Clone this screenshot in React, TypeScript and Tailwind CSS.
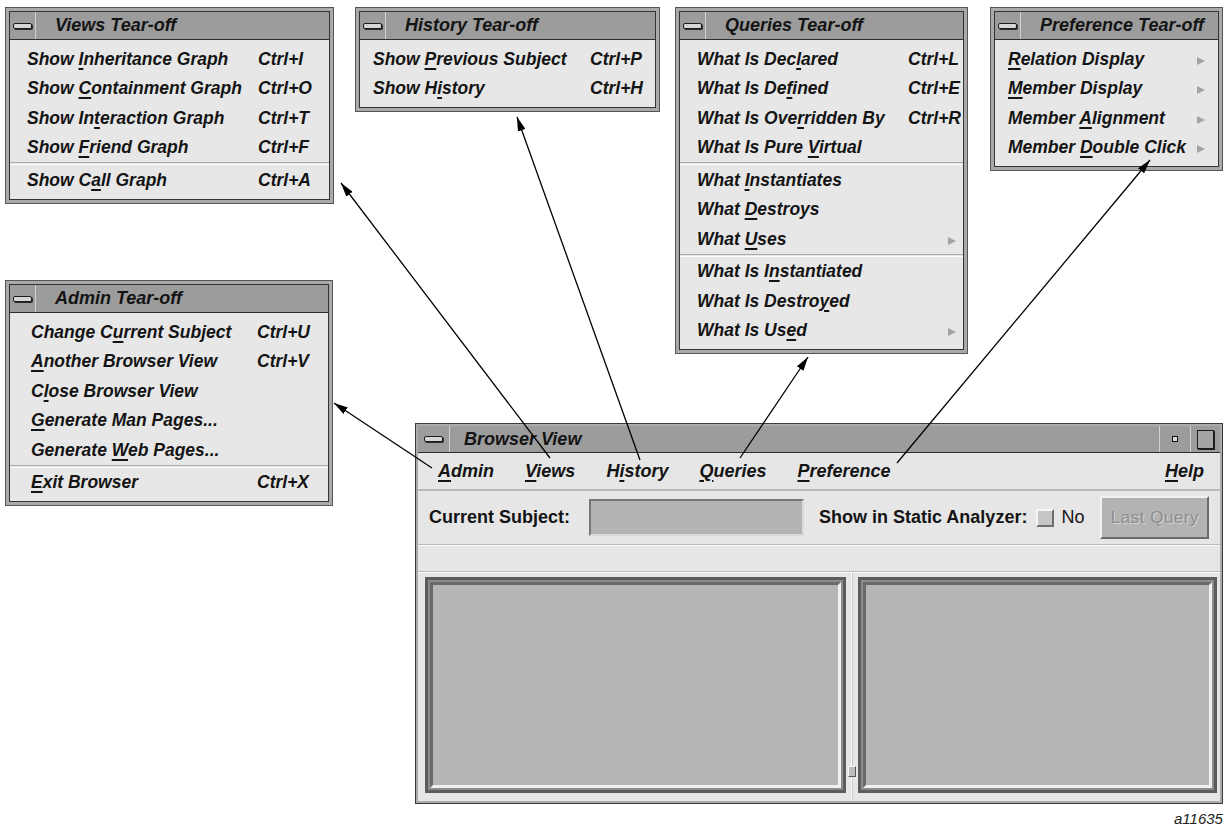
import React from 'react';

type Row = { t: string; k?: string; sub?: boolean } | 'sep';

// "&" marks the mnemonic letter
function Label({ t }: { t: string }) {
  const i = t.indexOf('&');
  if (i < 0) return <>{t}</>;
  return (
    <>
      {t.slice(0, i)}
      <span className="underline decoration-[1.5px] underline-offset-[3px]">{t[i + 1]}</span>
      {t.slice(i + 2)}
    </>
  );
}

function Tri() {
  return <span className="inline-block h-0 w-0 border-y-[4.5px] border-l-[8px] border-y-transparent border-l-[#a3a3a3]" />;
}

function MinusBox({ w }: { w: string }) {
  return (
    <div className={`${w} flex shrink-0 items-center justify-center border-r border-[#d2d2d2]`}>
      <div className="h-[6px] w-[19px] rounded-[2px] border border-[#1c1c1c] bg-[#d6d6d6] shadow-[1px_1px_0_#2a2a2a]" />
    </div>
  );
}

function TearOff({
  title,
  rows,
  pos,
  cols,
  pad,
  arrow = '',
}: {
  title: string;
  rows: Row[];
  pos: string;
  cols: string;
  pad: string;
  arrow?: string;
}) {
  return (
    <div className={`absolute ${pos} border border-[#565656] bg-[#a9a9a9] p-[3px]`}>
      <div className="border border-[#333]">
        <div className="flex h-[28px] border-b border-[#2e2e2e] bg-[#9c9c9c]">
          <MinusBox w="w-[26px]" />
          <div className="flex items-center pl-[19px] text-[18px] font-bold italic">{title}</div>
        </div>
        <div className="bg-[#e7e7e7] pb-[4px] pt-[4px]">
          {rows.map((r, i) =>
            r === 'sep' ? (
              <div key={i} className="h-[3px] border-y border-b-[#fbfbfb] border-t-[#a9a9a9]" />
            ) : (
              <div key={i} className={`grid h-[29.5px] items-center ${cols} ${pad} text-[17.5px] font-bold italic`}>
                <span className="whitespace-nowrap">
                  <Label t={r.t} />
                </span>
                <span className="flex items-center whitespace-nowrap">
                  {r.k}
                  {r.sub && (
                    <span className={arrow}>
                      <Tri />
                    </span>
                  )}
                </span>
              </div>
            )
          )}
        </div>
      </div>
    </div>
  );
}

function BrowserView() {
  return (
    <div className="absolute left-[415px] top-[423px] flex h-[381px] w-[808px] flex-col border border-[#3a3a3a] bg-[#ababab] p-[2px]">
      {/* title bar */}
      <div className="flex h-[27px] shrink-0 border-b border-[#2e2e2e] bg-[#9c9c9c]">
        <MinusBox w="w-[32px]" />
        <div className="flex flex-1 items-center pl-[14px] text-[18px] font-bold italic">Browser View</div>
        <div className="flex w-[31px] items-center justify-center border-l border-[#d2d2d2]">
          <div className="h-[6px] w-[6px] border border-[#111] bg-[#d9d9d9]" />
        </div>
        <div className="flex w-[30px] items-center justify-center border-l border-[#d2d2d2]">
          <div className="h-[19px] w-[17px] border border-[#1c1c1c] bg-[#a5a5a5] shadow-[1px_1px_0_#1c1c1c]" />
        </div>
      </div>

      <div className="flex flex-1 flex-col bg-[#e6e6e6]">
        {/* menu bar */}
        <div className="flex h-[38px] shrink-0 items-center gap-[31px] border-b-2 border-b-[#b9b9b9] pl-[20px] pr-[16px] text-[18px] font-bold italic">
          <span><Label t="&Admin" /></span>
          <span><Label t="&Views" /></span>
          <span><Label t="H&istory" /></span>
          <span><Label t="&Queries" /></span>
          <span><Label t="&Preference" /></span>
          <span className="ml-auto"><Label t="&Help" /></span>
        </div>

        {/* subject row */}
        <div className="flex h-[53px] shrink-0 items-center pl-[11px] text-[18px]">
          <span className="font-bold">Current Subject:</span>
          <div className="ml-[19px] h-[37px] w-[215px] border-2 border-b-[#dadada] border-l-[#777] border-r-[#dadada] border-t-[#777] bg-[#b4b4b4]" />
          <span className="ml-[15px] font-bold">Show in Static Analyzer:</span>
          <div className="ml-[9px] h-[18px] w-[18px] border-2 border-b-[#6e6e6e] border-l-[#f4f4f4] border-r-[#6e6e6e] border-t-[#f4f4f4] bg-[#c6c6c6]" />
          <span className="ml-[7px]">No</span>
          <div className="ml-[16px] flex h-[43px] w-[109px] items-center justify-center border-2 border-b-[#6a6a6a] border-l-[#f2f2f2] border-r-[#6a6a6a] border-t-[#f2f2f2] bg-[#b3b3b3] text-[17px] tracking-[0.5px] text-[#8d8d8d] [text-shadow:1px_1px_0_#d6d6d6]">
            Last Query
          </div>
        </div>

        <div className="h-[2px] shrink-0 border-b border-t border-b-[#fafafa] border-t-[#b9b9b9]" />
        <div className="h-[25px] shrink-0" />
        <div className="h-[2px] shrink-0 border-b border-t border-b-[#fafafa] border-t-[#b9b9b9]" />

        {/* panes */}
        <div className="flex flex-1 pl-[7px] pr-[3px]">
          <div className="mb-[8px] mt-[4px] w-[421px] border-[3px] border-[#5c5c5c] bg-[#8c8c8c] p-[2px]">
            <div className="h-full border-[3px] border-b-[#f1f1f1] border-l-[#6a6a6a] border-r-[#f1f1f1] border-t-[#6a6a6a] bg-[#b5b5b5]" />
          </div>
          <div className="flex w-[12px] flex-col items-center">
            <div className="w-[2px] flex-1 border-r border-[#c6c6c6] bg-[#fbfbfb]" />
            <div className="h-[11px] w-[8px] border border-b-[#555] border-l-[#fafafa] border-r-[#555] border-t-[#fafafa] bg-[#bdbdbd]" />
            <div className="h-[24px] w-[2px] border-r border-[#c6c6c6] bg-[#fbfbfb]" />
          </div>
          <div className="mb-[8px] mt-[4px] flex-1 border-[3px] border-[#5c5c5c] bg-[#8c8c8c] p-[2px]">
            <div className="h-full border-[3px] border-b-[#f1f1f1] border-l-[#6a6a6a] border-r-[#f1f1f1] border-t-[#6a6a6a] bg-[#b5b5b5]" />
          </div>
        </div>
      </div>
    </div>
  );
}

const arrows: [number, number, number, number][] = [
  [432, 468, 334, 403],
  [550, 458, 341, 183],
  [640, 460, 517, 117],
  [740, 458, 808, 357],
  [897, 463, 1150, 160],
];

export default function App() {
  return (
    <div className="relative h-[827px] w-[1225px] overflow-hidden bg-white font-['Liberation_Sans',Arial,sans-serif] text-[#141414]">
      <TearOff
        title="Views Tear-off"
        pos="left-[5px] top-[7px] w-[329px]"
        cols="grid-cols-[231px_1fr]"
        pad="pl-[17px]"
        rows={[
          { t: 'Show &Inheritance Graph', k: 'Ctrl+I' },
          { t: 'Show &Containment Graph', k: 'Ctrl+O' },
          { t: 'Show In&teraction Graph', k: 'Ctrl+T' },
          { t: 'Show &Friend Graph', k: 'Ctrl+F' },
          'sep',
          { t: 'Show C&all Graph', k: 'Ctrl+A' },
        ]}
      />
      <TearOff
        title="History Tear-off"
        pos="left-[355px] top-[7px] w-[305px]"
        cols="grid-cols-[217px_1fr]"
        pad="pl-[13px]"
        rows={[
          { t: 'Show &Previous Subject', k: 'Ctrl+P' },
          { t: 'Show H&istory', k: 'Ctrl+H' },
        ]}
      />
      <TearOff
        title="Queries Tear-off"
        pos="left-[675px] top-[7px] w-[293px]"
        cols="grid-cols-[211px_1fr]"
        pad="pl-[17px]"
        arrow="ml-[40px]"
        rows={[
          { t: 'What Is Dec&lared', k: 'Ctrl+L' },
          { t: 'What Is De&fined', k: 'Ctrl+E' },
          { t: 'What Is Ove&rridden By', k: 'Ctrl+R' },
          { t: 'What Is Pure &Virtual' },
          'sep',
          { t: 'What &Instantiates' },
          { t: 'What &Destroys' },
          { t: 'What &Uses', sub: true },
          'sep',
          { t: 'What Is I&nstantiated' },
          { t: 'What Is Destro&yed' },
          { t: 'What Is Us&ed', sub: true },
        ]}
      />
      <TearOff
        title="Preference Tear-off"
        pos="left-[990px] top-[7px] w-[233px]"
        cols="grid-cols-[189px_1fr]"
        pad="pl-[13px]"
        rows={[
          { t: '&Relation Display', sub: true },
          { t: '&Member Display', sub: true },
          { t: 'Member &Alignment', sub: true },
          { t: 'Member &Double Click', sub: true },
        ]}
      />
      <TearOff
        title="Admin Tear-off"
        pos="left-[5px] top-[280px] w-[328px]"
        cols="grid-cols-[226px_1fr]"
        pad="pl-[21px]"
        rows={[
          { t: 'Change C&urrent Subject', k: 'Ctrl+U' },
          { t: '&Another Browser View', k: 'Ctrl+V' },
          { t: 'C&lose Browser View' },
          { t: '&Generate Man Pages...' },
          { t: 'Generate &Web Pages...' },
          'sep',
          { t: '&Exit Browser', k: 'Ctrl+X' },
        ]}
      />

      <BrowserView />

      <span className="absolute left-[1174px] top-[808px] text-[15px] italic text-[#222]">a11635</span>

      <svg className="pointer-events-none absolute inset-0" width="1225" height="827">
        <defs>
          <marker id="ah" viewBox="0 0 14 8" refX="14" refY="4" markerWidth="14" markerHeight="8" markerUnits="userSpaceOnUse" orient="auto">
            <path d="M0,0 L14,4 L0,8 z" fill="#000" />
          </marker>
        </defs>
        {arrows.map(([x1, y1, x2, y2], i) => (
          <line key={i} x1={x1} y1={y1} x2={x2} y2={y2} stroke="#000" strokeWidth="1.3" markerEnd="url(#ah)" />
        ))}
      </svg>
    </div>
  );
}
